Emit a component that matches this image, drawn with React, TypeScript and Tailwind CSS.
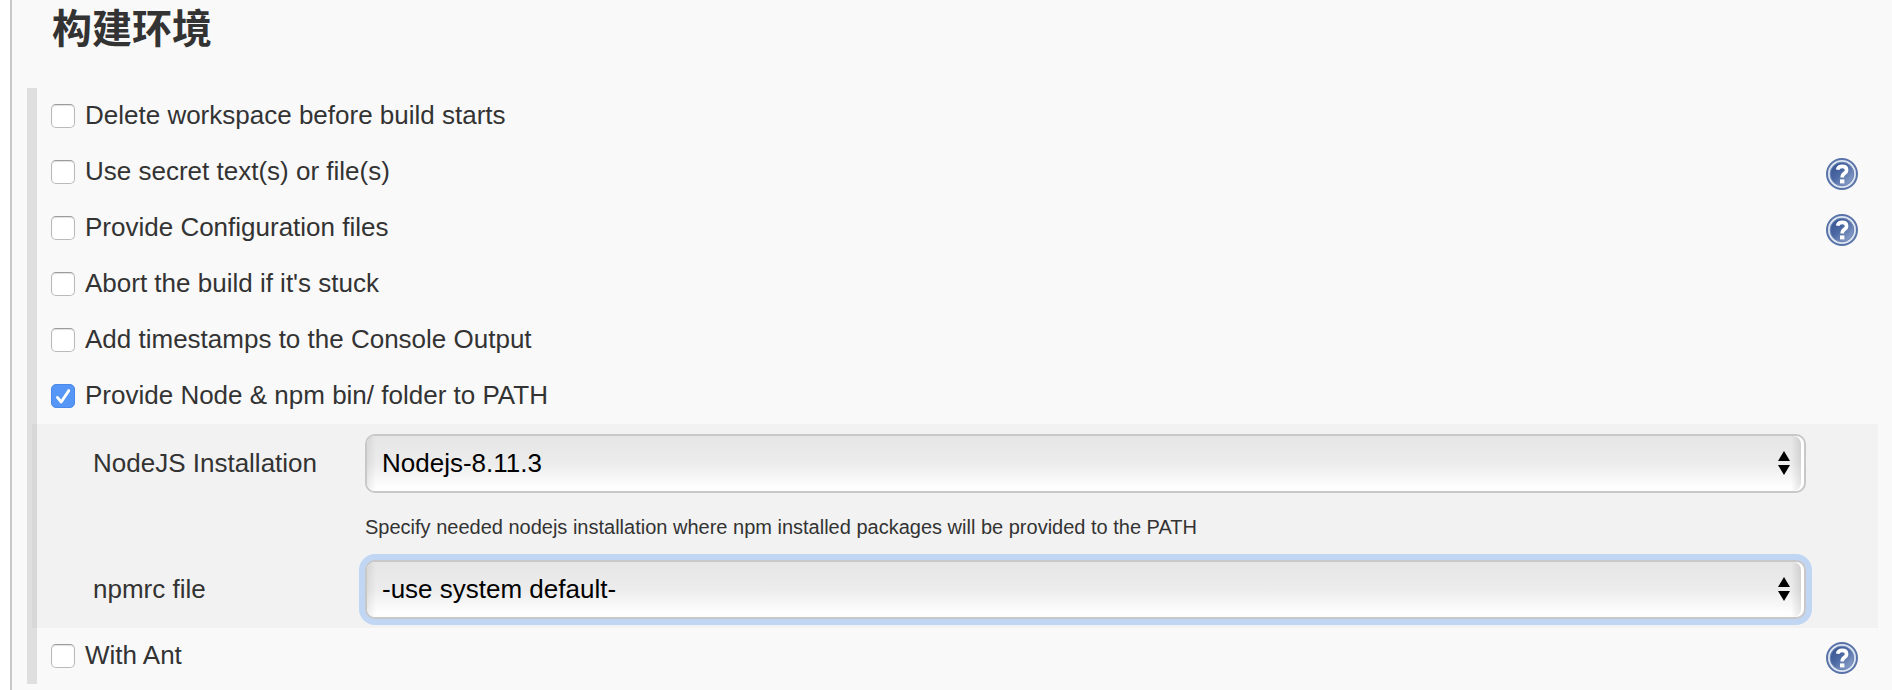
import type { ReactNode } from "react";

function HelpIcon() {
  return (
    <svg viewBox="0 0 32 32" className="block size-8 shrink-0" aria-label="Help">
      <defs>
        <linearGradient id="disc" x1="0" y1="0" x2="1" y2="1">
          <stop offset="0" stopColor="#34528f" />
          <stop offset="0.45" stopColor="#4c69a3" />
          <stop offset="1" stopColor="#9db0d4" />
        </linearGradient>
      </defs>
      <circle cx="16" cy="16" r="15" fill="#dde5f2" stroke="#5973a8" strokeWidth="2" />
      <circle cx="16" cy="16" r="11.8" fill="url(#disc)" stroke="#6a83b5" strokeWidth="1" />
      <path d="M11.6 11.8 Q12.2 8.4 16.2 8.4 Q20.6 8.4 20.6 12 Q20.6 14.2 18.2 15.6 Q16.2 16.8 16.2 19.4" fill="none" stroke="#fff" strokeWidth="3.6" />
      <rect x="14" y="21.4" width="4.4" height="4" fill="#fff" />
    </svg>
  );
}

function CheckBox({ checked }: { checked?: boolean }) {
  if (checked) {
    return (
      <span className="flex size-6 shrink-0 items-center justify-center rounded-[5px] border border-[#4a88ea] bg-[#5596f6]">
        <svg viewBox="0 0 24 24" className="size-6 shrink-0">
          <path d="M6.4 13.4 L10.2 18 L17.8 6.6" fill="none" stroke="#fff" strokeWidth="2.8" strokeLinecap="round" strokeLinejoin="round" />
        </svg>
      </span>
    );
  }
  return (
    <span className="size-6 shrink-0 rounded-[5px] border border-[#b9b9b9] border-t-[#9c9c9c] bg-white shadow-[inset_0_1px_1px_#e0e0e0]" />
  );
}

function OptionRow({ label, checked, help }: { label: string; checked?: boolean; help?: boolean }) {
  return (
    <div className="flex h-14 items-start pl-6 pr-[34px]">
      <div className="mt-4 flex h-6 grow items-center">
        <CheckBox checked={checked} />
        <span className="ml-2.5 whitespace-nowrap pb-0.5 text-[26px] leading-6">{label}</span>
      </div>
      {help && (
        <div className="mt-3.5">
          <HelpIcon />
        </div>
      )}
    </div>
  );
}

function SelectBox({ value, focused }: { value: string; focused?: boolean }) {
  return (
    <div
      className={
        "flex h-[59px] w-[1441px] items-center justify-between rounded-[10px] border-2 border-[#c8c8c8] bg-white pr-[3px] " +
        (focused ? "ring-6 ring-[#c0d6f3]" : "")
      }
    >
      <div className="flex h-full w-full items-center justify-between rounded-[8px] bg-[linear-gradient(to_right,#00000012,transparent_9px,transparent_calc(100%-10px),#0000001a),linear-gradient(to_bottom,#e6e6e6,#ececec_50%,#fdfdfd_90%,#fff)] pb-0.5 pl-[15px] pr-[11px]">
        <span className="text-[26px] leading-[30px] text-black">{value}</span>
        <svg viewBox="0 0 12 24" className="h-6 w-3">
          <path d="M6 0 L12 10 H0 Z M0 14 H12 L6 24 Z" fill="#000" />
        </svg>
      </div>
    </div>
  );
}

function Field({ label, children }: { label: string; children: ReactNode }) {
  return (
    <div className="flex h-[59px] items-center">
      <span className="w-[272px] shrink-0 pb-0.5 text-[26px] leading-[30px]">{label}</span>
      {children}
    </div>
  );
}

export default function App() {
  return (
    <div className="flex h-[690px] w-[1892px] overflow-hidden bg-white pl-2.5 font-['Liberation_Sans','Noto_Sans_CJK_SC',sans-serif] text-[#333]">
      <main className="grow border-l-2 border-[#c8c8c8] bg-[#f9f9f9] pl-[15px]">
        <h1 className="h-[88px] pl-[25px] pt-[9px] text-[40px] font-bold leading-[40px]">构建环境</h1>
        <section className="grid h-[596px] grid-cols-[5px_5px_1fr] grid-rows-[336px_204px_56px]">
          <div className="col-span-2 col-start-1 row-span-3 row-start-1 bg-[#dfdfdf]" />
          <div className="col-start-3 row-start-1 -ml-2.5">
            <OptionRow label="Delete workspace before build starts" />
            <OptionRow label="Use secret text(s) or file(s)" help />
            <OptionRow label="Provide Configuration files" help />
            <OptionRow label="Abort the build if it's stuck" />
            <OptionRow label="Add timestamps to the Console Output" />
            <OptionRow label="Provide Node & npm bin/ folder to PATH" checked />
          </div>
          <div className="col-span-2 col-start-2 row-start-2 mr-3.5 bg-black/[0.027] pl-[61px] pt-2.5">
            <Field label="NodeJS Installation">
              <SelectBox value="Nodejs-8.11.3" />
            </Field>
            <p className="ml-[272px] h-[67px] pt-[22px] text-[20px] leading-6">
              Specify needed nodejs installation where npm installed packages will be provided to the PATH
            </p>
            <Field label="npmrc file">
              <SelectBox value="-use system default-" focused />
            </Field>
          </div>
          <div className="col-start-3 row-start-3 -ml-2.5">
            <OptionRow label="With Ant" help />
          </div>
        </section>
      </main>
    </div>
  );
}
